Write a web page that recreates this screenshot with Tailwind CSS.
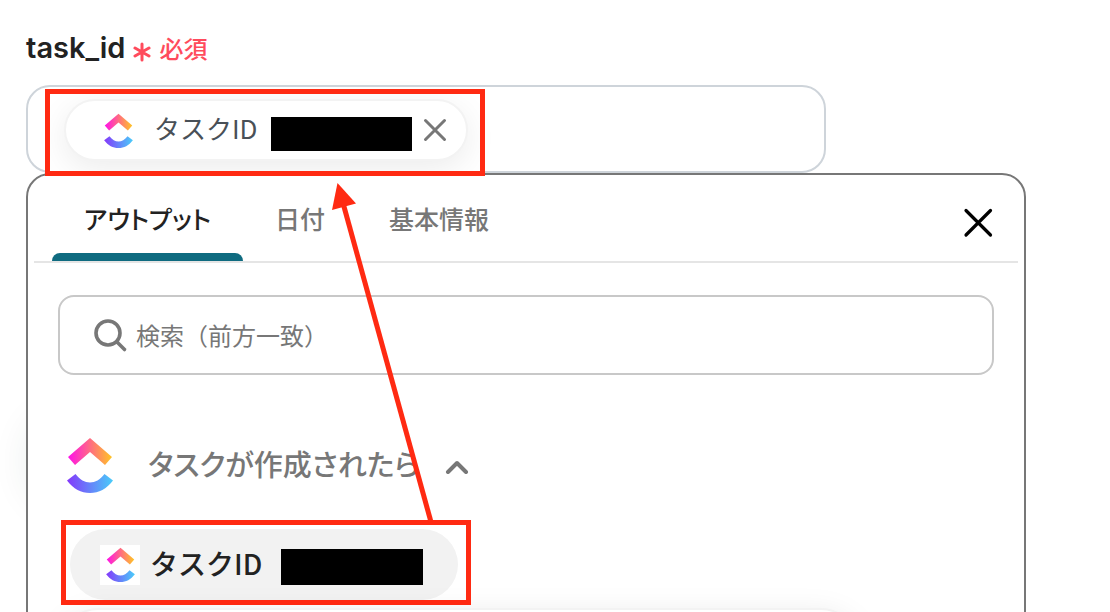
<!DOCTYPE html>
<html lang="ja">
  <head>
    <meta charset="UTF-8">
    <meta name="viewport" content="width=device-width, initial-scale=1.0">
    <title>task_id</title>
    <script src="https://cdn.jsdelivr.net/npm/@tailwindcss/browser@4"></script>
  </head>
  <body class="relative h-screen overflow-hidden bg-white font-['Noto_Sans_CJK_JP',sans-serif] text-[#222]">
    <!-- shared logo shapes -->
    <svg class="absolute size-0" aria-hidden="true">
      <defs>
        <linearGradient id="warm" x1="0" x2="1" y1="0" y2="0">
          <stop offset="0" stop-color="#ff10ea" />
          <stop offset=".5" stop-color="#ff6b83" />
          <stop offset="1" stop-color="#ffc524" />
        </linearGradient>
        <linearGradient id="cool" x1="0" x2="1" y1="0" y2="0">
          <stop offset="0" stop-color="#8438fb" />
          <stop offset="1" stop-color="#49ccf9" />
        </linearGradient>
        <symbol id="logo" viewBox="0 0 46 56">
          <path fill="url(#warm)" d="M1 20 23 1l22 19-7 8-15-13L8 28z" />
          <path fill="url(#cool)" d="M0 43.500l8.500-6.500c4.500 5.800 9.200 8.500 14.500 8.500s10-2.700 14.500-8.500l8.500 6.500C39.500 52 32 56 23 56S6.500 52 0 43.500z" />
        </symbol>
      </defs>
    </svg>

    <main class="pt-7 pr-[84px] pl-[26px]">
      <div class="mb-[17px] flex h-10 items-center gap-2">
        <h1 class="font-['Inter',sans-serif] text-[29px] leading-10 font-semibold">task_id</h1>
        <p class="flex items-center gap-2 text-2xl font-medium text-[#ff4b5c]">
          <svg class="mt-2 h-5 w-[18px]" viewBox="0 0 18 20" fill="none" stroke="currentColor" stroke-width="3" stroke-linecap="round"><path d="M9 2v16M2 6l14 8M16 6 2 14" /></svg>
          必須
        </p>
      </div>

      <div class="flex h-[88px] w-4/5 items-center rounded-3xl border-2 border-[#ced4da] pt-0.5 pl-9">
        <div class="flex h-[62px] items-center rounded-full border-2 border-[#f3f3f3] bg-white pr-4 pl-8 shadow-[0_8px_32px_rgba(0,0,0,0.08)]">
          <span class="flex size-10 items-center justify-center"><svg class="h-[35px] w-[29px]"><use href="#logo" /></svg></span>
          <span class="mb-1 ml-4 text-[26px] leading-10 text-[#495057]">タスクID</span>
          <span class="mt-2 ml-[13px] h-[34px] w-[141px] bg-black"></span>
          <button class="ml-2 flex size-[30px] items-center justify-center text-[#777]" aria-label="削除">
            <svg class="size-6" viewBox="0 0 24 24" fill="none" stroke="currentColor" stroke-width="3" stroke-linecap="round"><path d="m2.500 2.500 19 19m0-19-19 19" /></svg>
          </button>
        </div>
      </div>

      <div class="relative">
        <div class="absolute top-60 left-0 h-24 w-20 rounded-full shadow-[0_0_36px_rgba(15,60,50,0.08)]"></div>
        <section class="relative h-screen rounded-t-3xl border-2 border-[#777] bg-white">
          <div class="mx-[6px] flex h-[88px] border-b-2 border-[#e5e5e5] pl-[18px]">
            <div class="flex flex-1 text-[25px] font-medium text-[#777] [font-feature-settings:'palt']" role="tablist">
              <button class="relative px-8 pt-0.5 text-[#222]" role="tab" aria-selected="true">アウトプット
                <span class="absolute inset-x-0 bottom-0 h-2 rounded-t-lg bg-[#0f6b80]"></span>
              </button>
              <button class="px-8 pt-0.5" role="tab" aria-selected="false">日付</button>
              <button class="px-8 pt-0.5" role="tab" aria-selected="false">基本情報</button>
            </div>
            <button class="mr-6 flex items-center pt-2 text-black" aria-label="閉じる">
              <svg class="size-8" viewBox="0 0 32 32" fill="none" stroke="currentColor" stroke-width="3.200" stroke-linecap="round"><path d="m4 4.500 24.500 24.500M28.500 4.500 4 29" /></svg>
            </button>
          </div>

          <label class="mx-[30px] mt-8 flex h-20 items-center gap-2 rounded-2xl border-2 border-[#c8c8c8] pl-8 text-[#777]">
            <svg class="size-9" viewBox="0 0 36 36" fill="none" stroke="currentColor" stroke-width="3.600" stroke-linecap="round"><circle cx="16" cy="16" r="12" /><path d="m25 25 7.500 7.500" /></svg>
            <input type="text" aria-label="検索" placeholder="検索（前方一致）" class="mb-0.5 h-10 flex-1 text-2xl outline-none placeholder:text-[#777]">
          </label>

          <button class="mt-[58px] ml-[38px] flex h-16 items-center text-[#777]" aria-expanded="true">
            <svg class="h-[56px] w-12"><use href="#logo" /></svg>
            <span class="mb-1 ml-[34px] text-[29px] leading-10 font-medium [font-feature-settings:'palt']">タスクが作成されたら</span>
            <svg class="mt-1 ml-[25px] h-[14px] w-6" viewBox="0 0 24 14" fill="none" stroke="currentColor" stroke-width="4" stroke-linecap="round" stroke-linejoin="round"><path d="m3 12 9-9 9 9" /></svg>
          </button>

          <div class="mt-8 flex flex-col items-start gap-2 pl-[42px]">
            <button class="flex h-[71px] items-center rounded-full bg-[#f2f2f2] pr-[35px] pl-[30px]">
              <span class="flex size-10 items-center justify-center bg-white"><svg class="h-[35px] w-[29px]"><use href="#logo" /></svg></span>
              <span class="mb-1 ml-2.5 text-[28px] leading-10 font-medium">タスクID</span>
              <span class="mt-1 ml-[19px] h-9 w-[142px] bg-black"></span>
            </button>
            <button class="-ml-2 h-[72px] w-5/6 rounded-full border-2 border-[#f3f3f3] bg-white shadow-[0_8px_32px_rgba(0,0,0,0.1)]" aria-label="アウトプット"></button>
          </div>
        </section>
      </div>
    </main>

    <!-- annotations -->
    <div class="pointer-events-none absolute top-[89px] left-[45px] h-[87px] w-[440px] border-5 border-[#ff2a12]"></div>
    <div class="pointer-events-none absolute top-[520px] left-[61px] h-[85px] w-[410px] border-5 border-[#ff2a12]"></div>
    <svg class="pointer-events-none absolute top-[180px] left-[320px] h-[345px] w-[120px]" viewBox="0 0 120 345">
      <path d="M23 23 111 342" stroke="#ff2a12" stroke-width="5" />
      <path d="M17.500 3 36 23.500 12 30z" fill="#ff2a12" />
    </svg>
  </body>
</html>
